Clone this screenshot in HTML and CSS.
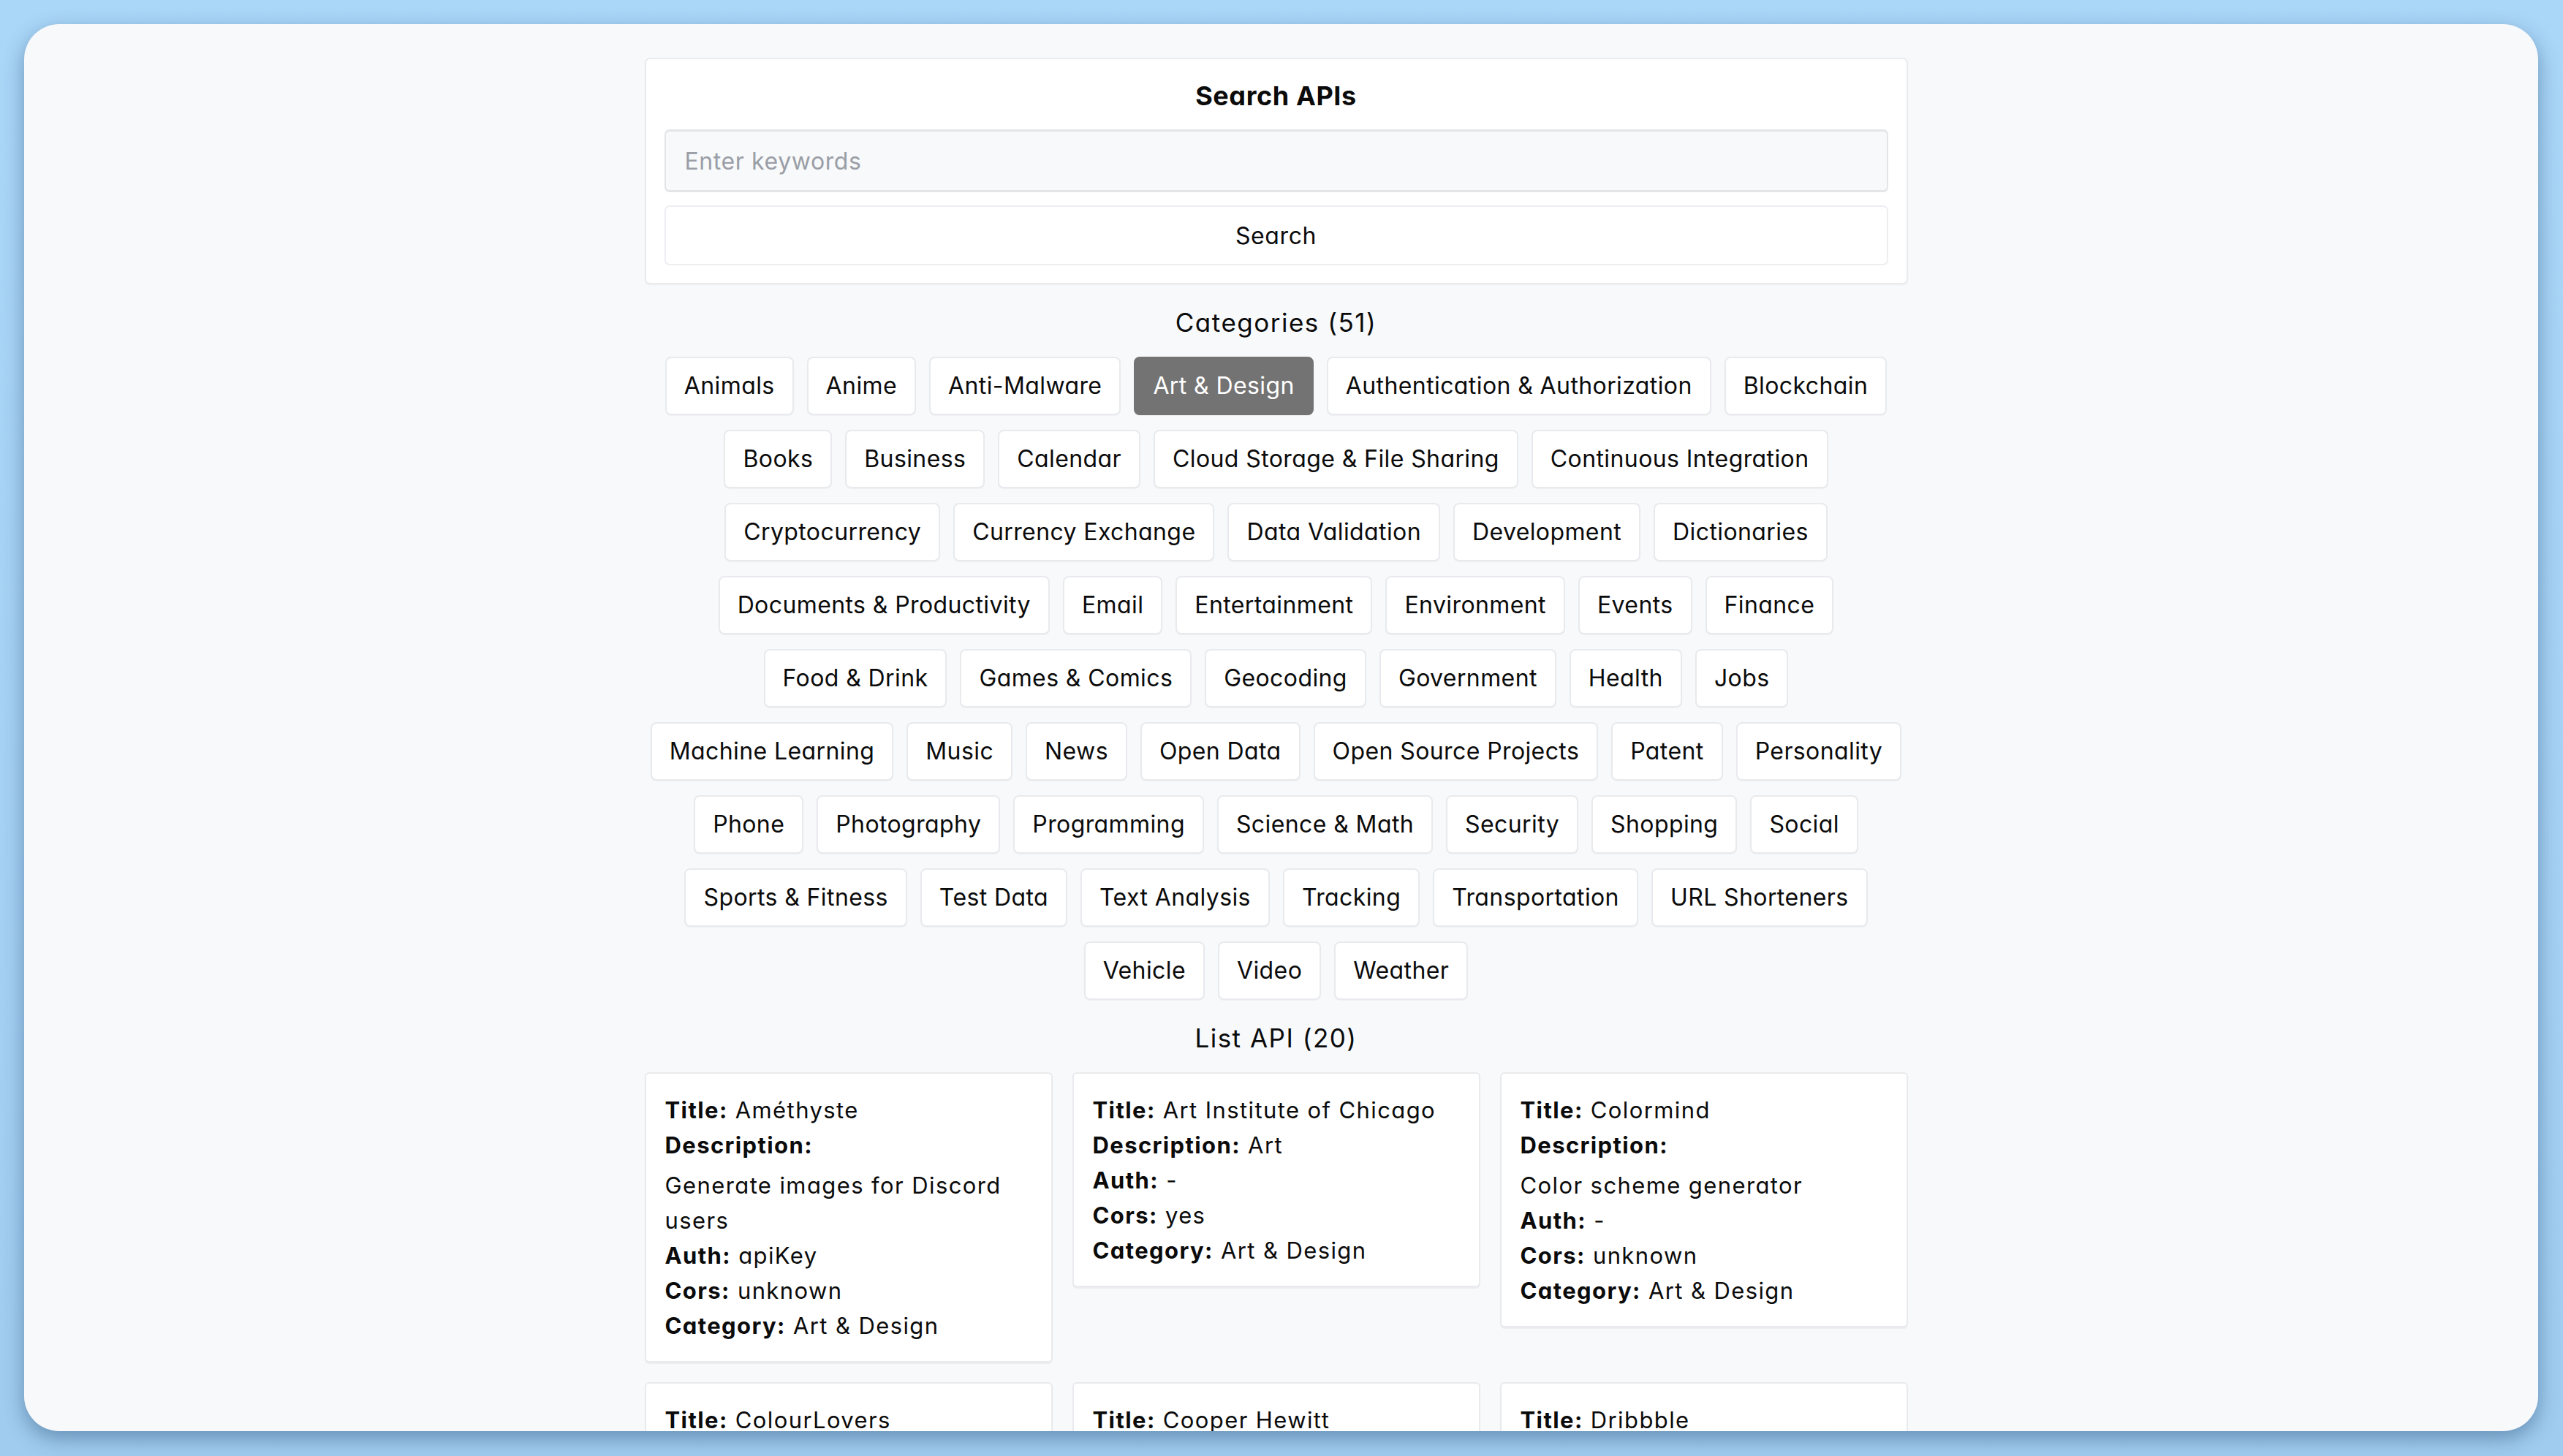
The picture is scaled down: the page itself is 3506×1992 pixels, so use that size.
FILE: index.html
```html
<!DOCTYPE html>
<html lang="en">
<head>
<meta charset="utf-8">
<title>Search APIs</title>
<link rel="stylesheet" href="styles.css">
</head>
<body>
<div class="window">
  <main class="page">
    <section class="search-card">
      <h1 class="search-title">Search APIs</h1>
      <input class="search-input" type="text" placeholder="Enter keywords">
      <button class="search-btn" type="button">Search</button>
    </section>

    <h2 class="section-title">Categories (51)</h2>
    <div class="chips">
      <button class="chip">Animals</button>
      <button class="chip">Anime</button>
      <button class="chip">Anti-Malware</button>
      <button class="chip active">Art &amp; Design</button>
      <button class="chip">Authentication &amp; Authorization</button>
      <button class="chip">Blockchain</button>
      <button class="chip">Books</button>
      <button class="chip">Business</button>
      <button class="chip">Calendar</button>
      <button class="chip">Cloud Storage &amp; File Sharing</button>
      <button class="chip">Continuous Integration</button>
      <button class="chip">Cryptocurrency</button>
      <button class="chip">Currency Exchange</button>
      <button class="chip">Data Validation</button>
      <button class="chip">Development</button>
      <button class="chip">Dictionaries</button>
      <button class="chip">Documents &amp; Productivity</button>
      <button class="chip">Email</button>
      <button class="chip">Entertainment</button>
      <button class="chip">Environment</button>
      <button class="chip">Events</button>
      <button class="chip">Finance</button>
      <button class="chip">Food &amp; Drink</button>
      <button class="chip">Games &amp; Comics</button>
      <button class="chip">Geocoding</button>
      <button class="chip">Government</button>
      <button class="chip">Health</button>
      <button class="chip">Jobs</button>
      <button class="chip">Machine Learning</button>
      <button class="chip">Music</button>
      <button class="chip">News</button>
      <button class="chip">Open Data</button>
      <button class="chip">Open Source Projects</button>
      <button class="chip">Patent</button>
      <button class="chip">Personality</button>
      <button class="chip">Phone</button>
      <button class="chip">Photography</button>
      <button class="chip">Programming</button>
      <button class="chip">Science &amp; Math</button>
      <button class="chip">Security</button>
      <button class="chip">Shopping</button>
      <button class="chip">Social</button>
      <button class="chip">Sports &amp; Fitness</button>
      <button class="chip">Test Data</button>
      <button class="chip">Text Analysis</button>
      <button class="chip">Tracking</button>
      <button class="chip">Transportation</button>
      <button class="chip">URL Shorteners</button>
      <button class="chip">Vehicle</button>
      <button class="chip">Video</button>
      <button class="chip">Weather</button>
    </div>

    <h2 class="section-title">List API (20)</h2>
    <div class="cards">
      <article class="card">
        <p><b>Title:</b> Améthyste</p>
        <p><b>Description:</b></p>
        <p class="desc-block">Generate images for Discord users</p>
        <p><b>Auth:</b> apiKey</p>
        <p><b>Cors:</b> unknown</p>
        <p><b>Category:</b> Art &amp; Design</p>
      </article>
      <article class="card">
        <p><b>Title:</b> Art Institute of Chicago</p>
        <p><b>Description:</b> Art</p>
        <p><b>Auth:</b> -</p>
        <p><b>Cors:</b> yes</p>
        <p><b>Category:</b> Art &amp; Design</p>
      </article>
      <article class="card">
        <p><b>Title:</b> Colormind</p>
        <p><b>Description:</b></p>
        <p class="desc-block">Color scheme generator</p>
        <p><b>Auth:</b> -</p>
        <p><b>Cors:</b> unknown</p>
        <p><b>Category:</b> Art &amp; Design</p>
      </article>
      <article class="card">
        <p><b>Title:</b> ColourLovers</p>
        <p><b>Description:</b></p>
        <p class="desc-block">Get various patterns, palettes and images</p>
        <p><b>Auth:</b> -</p>
        <p><b>Cors:</b> unknown</p>
        <p><b>Category:</b> Art &amp; Design</p>
      </article>
      <article class="card">
        <p><b>Title:</b> Cooper Hewitt</p>
        <p><b>Description:</b></p>
        <p class="desc-block">Smithsonian Design Museum</p>
        <p><b>Auth:</b> apiKey</p>
        <p><b>Cors:</b> unknown</p>
        <p><b>Category:</b> Art &amp; Design</p>
      </article>
      <article class="card">
        <p><b>Title:</b> Dribbble</p>
        <p><b>Description:</b></p>
        <p class="desc-block">Discover the world's top designers &amp; creatives</p>
        <p><b>Auth:</b> OAuth</p>
        <p><b>Cors:</b> unknown</p>
        <p><b>Category:</b> Art &amp; Design</p>
      </article>
    </div>
  </main>
</div>
</body>
</html>
```

FILE: styles.css
```css
* {
  box-sizing: border-box;
}

html,
body {
  margin: 0;
}

body {
  width: 3506px;
  height: 1992px;
  overflow: hidden;
  padding: 33px 34px 34px 33px;
  background: linear-gradient(180deg, #aad6f8 0%, #a5d1f4 60%, #a0ccef 100%);
  font-family: Inter, "Open Sans", "Noto Sans", sans-serif;
  font-feature-settings: "cv11" 1;
  color: #0b0b0b;
}

.window {
  width: 3439px;
  height: 1925px;
  padding: 46px 14px 0 0;
  background: #f8f9fb;
  border-radius: 48px;
  box-shadow: 0 10px 28px rgba(30, 70, 110, 0.45);
  overflow: hidden;
}

.page {
  width: 1728px;
  margin: 0 auto;
}

/* Search card */
.search-card {
  background: #ffffff;
  border: 2px solid #e9ebee;
  border-radius: 7px;
  padding: 26px 25px 24px;
  box-shadow: 0 1px 2px rgba(0, 0, 0, 0.05);
}

.search-title {
  margin: 0 0 22px;
  text-align: center;
  font-size: 36px;
  line-height: 48px;
  font-weight: 700;
  letter-spacing: 0.6px;
}

.search-input {
  display: block;
  width: 100%;
  height: 86px;
  padding: 0 26px;
  border: 2px solid #e3e5e9;
  border-top-width: 3px;
  border-bottom-width: 3px;
  border-radius: 7px;
  background: #f8f9fa;
  font-family: inherit;
  font-feature-settings: "cv11" 1;
  font-size: 32px;
  letter-spacing: 0.6px;
  color: #0b0b0b;
  outline: none;
}

.search-input::placeholder {
  color: #9a9ea6;
}

.search-btn {
  display: block;
  width: 100%;
  height: 82px;
  margin-top: 18px;
  border: 2px solid #eceef1;
  border-radius: 7px;
  background: #ffffff;
  font-family: inherit;
  font-feature-settings: "cv11" 1;
  font-size: 32px;
  letter-spacing: 0.6px;
  color: #0b0b0b;
}

/* Section headings */
.section-title {
  margin: 26px 0 21px;
  text-align: center;
  font-size: 35px;
  line-height: 52px;
  font-weight: 400;
  letter-spacing: 1.5px;
}

/* Category chips */
.chips {
  display: flex;
  flex-wrap: wrap;
  justify-content: center;
  gap: 20px 18px;
}

.chip {
  height: 80px;
  padding: 0 24px;
  border: 2px solid #e8eaed;
  border-radius: 8px;
  background: #ffffff;
  box-shadow: 0 1px 1px rgba(0, 0, 0, 0.04);
  font-family: inherit;
  font-feature-settings: "cv11" 1;
  font-size: 32px;
  line-height: 48px;
  letter-spacing: 0.4px;
  color: #0b0b0b;
  white-space: nowrap;
}

.chip.active {
  background: #737373;
  border-color: #737373;
  color: #ffffff;
}

/* API cards */
.cards {
  display: grid;
  grid-template-columns: repeat(3, 1fr);
  gap: 27px;
  align-items: start;
}

.card {
  background: #ffffff;
  border: 2px solid #e8eaed;
  border-radius: 6px;
  padding: 26px 26px 24px;
  box-shadow: 0 2px 1px rgba(0, 0, 0, 0.05);
  font-size: 31px;
  line-height: 48px;
  letter-spacing: 1.4px;
}

.card p {
  margin: 0;
}

.card b {
  font-weight: 700;
}

.card .desc-block {
  margin-top: 7px;
}
```
